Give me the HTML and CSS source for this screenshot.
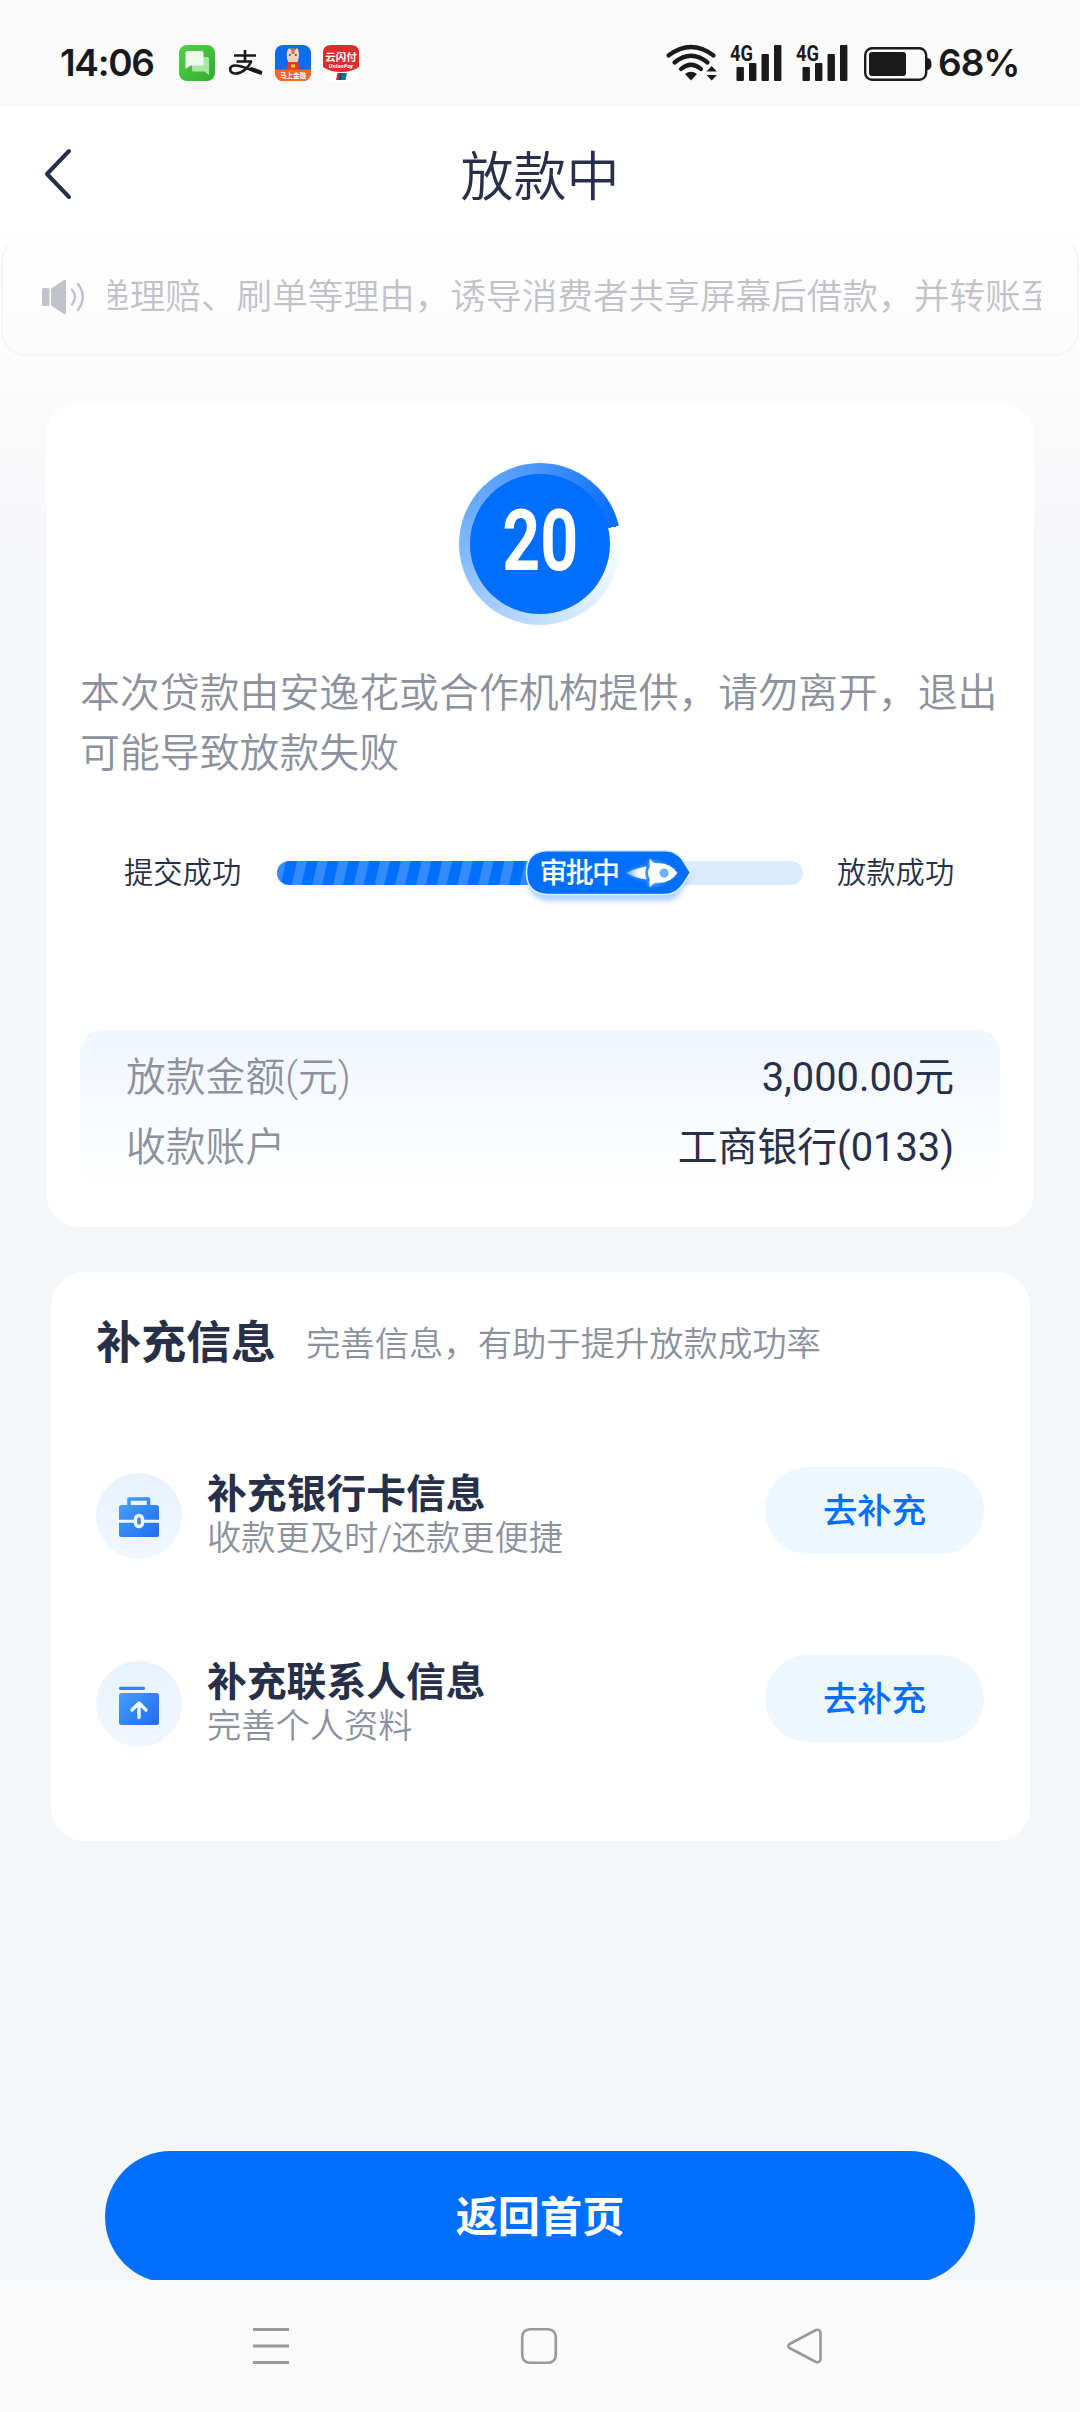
FILE: index.html
```html
<!DOCTYPE html>
<html lang="zh-CN">
<head>
<meta charset="utf-8">
<title>放款中</title>
<link rel="stylesheet" href="styles.css">
</head>
<body>
<div class="screen">
  <header class="status">
    <div class="status-left">
      <span class="clock">14:06</span>
      <svg class="app" viewBox="0 0 36 36">
        <defs><linearGradient id="msg" x1="0" y1="0" x2="1" y2="1"><stop offset="0" stop-color="#55cf4c"/><stop offset="1" stop-color="#2fae2a"/></linearGradient></defs>
        <rect width="36" height="36" rx="8" fill="url(#msg)"/>
        <path d="M13 12h15.500q1.500 0 1.500 1.500V30l-4.500-3.500H14.500q-1.500 0-1.500-1.500z" fill="#a9e6a4"/>
        <path d="M8 6h15q1.500 0 1.500 1.500v11.500q0 1.500-1.500 1.500H11.500L6.500 24V7.500Q6.500 6 8 6z" fill="#eefbec"/>
      </svg>
      <svg class="app" viewBox="0 0 36 36">
        <g fill="none" stroke="#1a1a1a" stroke-width="2.600">
          <path d="M7 10.500H29M18 5v11M9.500 16.500H25"/>
          <path d="M24.500 16C22 22 15 29 8 28.500C2 28 1.500 21.500 7 20.500C15 19.500 24 26 35 28.500"/>
          <path d="M23 23.500L34.500 27.800" stroke-width="4"/>
        </g>
      </svg>
      <svg class="app" viewBox="0 0 36 36">
        <defs><clipPath id="sq"><rect width="36" height="36" rx="8"/></clipPath></defs>
        <g clip-path="url(#sq)">
          <rect width="36" height="36" fill="#0b6cf3"/>
          <path d="M12 14Q11 5 14.500 3l2 2.500h3L22 3q3 3 1.500 11l-1 3h-9z" fill="#f4d3bd"/>
          <path d="M16.500 3h3v6h-3z" fill="#c97448"/>
          <circle cx="14.800" cy="10" r="1" fill="#6b3325"/><circle cx="20.800" cy="10" r="1" fill="#6b3325"/>
          <path d="M11 25l2-8h10l2 8z" fill="#e93a20"/><path d="M16 19.500h4v3h-4z" fill="#ffd633"/>
          <rect y="24.500" width="36" height="12" fill="#fa6424"/>
          <text x="18" y="33" text-anchor="middle" class="tiny" font-size="6.500">马上金融</text>
        </g>
      </svg>
      <svg class="app" viewBox="0 0 36 36">
        <rect width="36" height="36" rx="8" fill="#fff"/>
        <path d="M8 0h20q8 0 8 8v14q-7 5-18 5T0 22V8q0-8 8-8z" fill="#e22a2c"/>
        <text x="18" y="15.500" text-anchor="middle" class="tiny" font-size="10.500">云闪付</text>
        <text x="18" y="22.500" text-anchor="middle" class="tiny union" font-size="5.400">UnionPay</text>
        <path d="M14.500 28h4l-1.500 7h-4z" fill="#d0263e"/><path d="M17 28h3.500L19 35h-3.500z" fill="#174a83"/><path d="M19.500 28H24l-1.500 7H18z" fill="#0c7d83"/>
      </svg>
    </div>
    <div class="status-right">
      <svg class="wifi" viewBox="0 0 52 36">
        <g fill="none" stroke="#1a1a1a" stroke-width="4.200" stroke-linecap="round">
          <path d="M2.500 10.500Q25 -6.500 47.500 10.500M8.500 17.500Q25 4 41.500 17.500M15 24Q25 15.500 35 24"/>
        </g>
        <path d="M19 29q6-4.500 12 0l-6 6.500z" fill="#1a1a1a"/>
        <path d="M40.500 26.500l5.200-5.500 5.200 5.500zM40.500 30h10.400l-5.200 5.500z" fill="#1a1a1a"/>
      </svg>
      <svg class="signal" viewBox="0 0 52 38">
        <text x="0" y="17" class="net" textLength="23" lengthAdjust="spacingAndGlyphs">4G</text>
        <g fill="#1a1a1a"><rect x="6.500" y="23" width="7.400" height="14" rx="1"/><rect x="19" y="19" width="7.400" height="18" rx="1"/><rect x="31.500" y="10" width="7.400" height="27" rx="1"/><rect x="44" y="1" width="7.400" height="36" rx="1"/></g>
      </svg>
      <svg class="signal" viewBox="0 0 52 38">
        <text x="0" y="17" class="net" textLength="23" lengthAdjust="spacingAndGlyphs">4G</text>
        <g fill="#1a1a1a"><rect x="6.500" y="23" width="7.400" height="14" rx="1"/><rect x="19" y="19" width="7.400" height="18" rx="1"/><rect x="31.500" y="10" width="7.400" height="27" rx="1"/><rect x="44" y="1" width="7.400" height="36" rx="1"/></g>
      </svg>
      <svg class="battery" viewBox="0 0 68 36">
        <rect x="1.200" y="2.200" width="61" height="31.600" rx="7" fill="none" stroke="#1a1a1a" stroke-width="2.400"/>
        <rect x="5" y="6" width="37" height="24" rx="3" fill="#1a1a1a"/>
        <path d="M63 12q4.500 0 4.500 6t-4.500 6z" fill="#1a1a1a"/>
      </svg>
      <span class="percent">68%</span>
    </div>
  </header>

  <nav class="titlebar">
    <svg class="back" viewBox="0 0 32 54"><path d="M27 4L5 27l22 23" fill="none" stroke="#273048" stroke-width="4" stroke-linecap="round" stroke-linejoin="round"/></svg>
    <h1>放款中</h1>
  </nav>

  <section class="notice">
    <svg class="speaker" viewBox="0 0 43 36">
      <g fill="#c2c3ca"><rect x="0" y="9" width="7.500" height="18" rx="1.500"/><path d="M9 9.500L22 1.200q2-1 2 1V34q0 2-2 1L9 26.500z"/></g>
      <path d="M30 10.500q6 7.500 0 15M36 5q9.500 13 0 26" fill="none" stroke="#c2c3ca" stroke-width="2.400" stroke-linecap="round"/>
    </svg>
    <div class="marquee"><span>递理赔、刷单等理由，诱导消费者共享屏幕后借款，并转账至</span></div>
  </section>

  <main>
    <section class="card progress-card">
      <div class="countdown"><div class="count-inner"><span>20</span></div></div>
      <p class="tip">本次贷款由安逸花或合作机构提供，请勿离开，退出可能导致放款失败</p>
      <div class="steps">
        <span class="step-label">提交成功</span>
        <div class="track">
          <div class="fill"></div>
          <div class="badge">
            <svg class="badge-shape" viewBox="0 0 168 64">
              <defs>
                <filter id="glow" x="-50%" y="-50%" width="200%" height="200%"><feGaussianBlur stdDeviation="2.500"/></filter>
                <linearGradient id="flame"><stop offset="0" stop-color="#fff" stop-opacity=".3"/><stop offset=".7" stop-color="#fff"/></linearGradient>
              </defs>
              <path d="M23 8H143q12 2 20 21q-8 21-20 22H23Q2 48 2 29Q2 8 23 8z" fill="#006eff" opacity=".3" filter="url(#glow)"/>
              <path d="M23 .8H141Q152 1 159 12L165.500 22.500L159 33Q152 44 141 44.500H23Q1.500 44 1.500 22.500Q1.500 1 23 .8z" fill="#006eff" stroke="#d8ebff" stroke-width="1.600"/>
              <g fill="#8cc4ff" opacity=".8" filter="url(#glow)"><path d="M102 23l19-7v14zM124 10l14 4 12 9-12 9-14 5z"/></g>
              <path d="M101 23Q111 18 121.500 16.500Q119 23 121.500 29.500Q111 28 101 23z" fill="url(#flame)"/>
              <path fill-rule="evenodd" d="M125 8.500Q127 12.500 131 13.300Q145 12 152.500 23Q145 34 131 32.700Q127 33.500 125 37.500Q123.500 34 125 29.500Q121 23 125 16.500Q123.500 12 125 8.500zM139 18.500a4.500 4.500 0 1 0 .01 0z" fill="#fff"/>
            </svg>
            <span class="badge-text">审批中</span>
          </div>
        </div>
        <span class="step-label">放款成功</span>
      </div>
      <dl class="details">
        <div><dt>放款金额(元)</dt><dd>3,000.00元</dd></div>
        <div><dt>收款账户</dt><dd>工商银行(0133)</dd></div>
      </dl>
    </section>

    <section class="card info-card">
      <div class="info-head"><h2>补充信息</h2><span>完善信息，有助于提升放款成功率</span></div>
      <div class="item">
        <svg class="item-icon" viewBox="0 0 86 86">
          <defs>
            <linearGradient id="disc" x2="0" y2="1"><stop offset="0" stop-color="#e8f2fe"/><stop offset="1" stop-color="#f2f7ff"/></linearGradient>
            <linearGradient id="ico" gradientUnits="userSpaceOnUse" x1="23" y1="25" x2="63" y2="64"><stop offset="0" stop-color="#4ba0fb"/><stop offset="1" stop-color="#1c6fef"/></linearGradient>
          </defs>
          <circle cx="43" cy="43" r="43" fill="url(#disc)"/>
          <path d="M33 34v-8h19.500v8" fill="none" stroke="url(#ico)" stroke-width="3.600" stroke-linejoin="round"/>
          <rect x="23" y="32" width="40" height="32" rx="2.500" fill="url(#ico)"/>
          <path d="M23 48.200h40" stroke="#eef6ff" stroke-width="3"/>
          <rect x="39.500" y="42.500" width="7" height="11" rx="3.500" fill="#4a86d8" stroke="#eef6ff" stroke-width="3.400"/>
        </svg>
        <div class="item-text"><h3>补充银行卡信息</h3><p>收款更及时/还款更便捷</p></div>
        <button class="add">去补充</button>
      </div>
      <div class="item">
        <svg class="item-icon" viewBox="0 0 86 86">
          <circle cx="43" cy="43" r="43" fill="url(#disc)"/>
          <rect x="23" y="25.800" width="26" height="3.200" rx="1.400" fill="#2e85f5"/>
          <rect x="23" y="32" width="40" height="32" rx="2.500" fill="url(#ico)"/>
          <path d="M43 56.500V43M36 49l7-7 7 7" fill="none" stroke="#f4f9ff" stroke-width="3.400" stroke-linecap="round" stroke-linejoin="round"/>
        </svg>
        <div class="item-text"><h3>补充联系人信息</h3><p>完善个人资料</p></div>
        <button class="add">去补充</button>
      </div>
    </section>
  </main>

  <div class="action"><button class="home">返回首页</button></div>

  <footer class="sysnav">
    <svg viewBox="0 0 40 40"><path d="M2 3.500h36M2 20h36M2 36.500h36" stroke="#999" stroke-width="3"/></svg>
    <svg viewBox="0 0 40 40"><rect x="4.200" y="3.200" width="33.600" height="33.600" rx="7.500" fill="none" stroke="#999" stroke-width="2.600"/></svg>
    <svg viewBox="0 0 40 40"><path d="M4.500 18Q2 20 4.500 22L31 36Q35 37 35.500 33V7Q35 3 31 4z" fill="none" stroke="#999" stroke-width="2.600" stroke-linejoin="round"/></svg>
  </footer>
</div>
</body>
</html>
```
FILE: styles.css
```css
* { box-sizing: border-box; margin: 0; padding: 0; }
body {
  width: 1080px;
  height: 2412px;
  overflow: hidden;
  font-family: Roboto, "Noto Sans CJK SC", sans-serif;
  color: #273048;
}
svg { display: block; flex: none; overflow: visible; }
button { border: 0; font-family: inherit; }

.screen {
  height: 2412px;
  display: flex;
  flex-direction: column;
  background: linear-gradient(#fff 220px, #fbfbfc 400px, #f5f6f8 560px);
}

/* Status bar */
.status {
  flex: none;
  height: 107px;
  padding: 18px 63px 0 60px;
  background: #fafafa;
  color: #1a1a1a;
  display: flex;
  justify-content: space-between;
  align-items: center;
}
.status-left, .status-right { display: flex; align-items: center; }
.clock {
  width: 119px;
  font: 600 37px/40px Inter, sans-serif;
  letter-spacing: -1.300px;
}
.app { width: 36px; height: 36px; margin-right: 12px; }
.tiny { fill: #fff; font-family: "Noto Sans CJK SC", sans-serif; font-weight: 700; }
.union { font-family: "Open Sans", sans-serif; font-style: italic; }
.wifi { width: 52px; height: 36px; margin-right: 12px; }
.signal { width: 52px; height: 38px; margin-right: 14px; }
.net { font: 700 22px Roboto, sans-serif; fill: #1a1a1a; }
.battery { width: 68px; height: 36px; margin: 2px 6px 0 2px; }
.percent { width: 79px; font: 600 37px/40px Inter, sans-serif; white-space: nowrap; letter-spacing: -1px; }

/* Title bar */
.titlebar {
  flex: none;
  height: 131px;
  padding: 2px 42px 0;
  display: grid;
  grid-template-columns: 32px 1fr 32px;
  align-items: center;
}
.back { width: 32px; height: 54px; }
h1 { text-align: center; font-weight: 350; font-size: 53px; line-height: 70px; padding-top: 8px; }

/* Scrolling notice */
.notice {
  flex: none;
  height: 118px;
  margin: 0 1px;
  padding: 0 36px 0 39px;
  border: 2px solid #f6f6f7;
  border-top-color: #fdfdfd;
  border-radius: 24px;
  display: flex;
  align-items: center;
  gap: 23px;
}
.speaker { width: 43px; height: 36px; }
.marquee {
  flex: 1;
  min-width: 0;
  overflow: hidden;
  white-space: nowrap;
  color: #c2c3ca;
  font-weight: 350;
  font-size: 35.650px;
  line-height: 50px;
}
.marquee span { display: inline-block; margin-left: -14px; }

.card { background: #fff; border-radius: 34px; }

/* Progress card */
.progress-card {
  height: 825px;
  margin: 46px 46px 0;
  padding: 61px 34px 0;
}
.countdown {
  width: 162px;
  height: 162px;
  margin: 0 auto;
  padding: 11px;
  border-radius: 50%;
  background: conic-gradient(from 77deg, #fff 0deg, #f2f8ff 30deg, #cbe4ff 90deg, #86bcff 180deg, #4d98fb 275deg, #0d72fb 345deg, #0970fd 360deg);
}
.count-inner {
  width: 140px;
  height: 140px;
  border-radius: 50%;
  background: #006eff;
  color: #fff;
  font-weight: 700;
  font-size: 86px;
  line-height: 134px;
  text-align: center;
}
.count-inner span { display: inline-block; transform: scaleX(.77); }
.tip {
  margin-top: 39px;
  font-weight: 350;
  font-size: 39.900px;
  line-height: 60px;
  color: #8d919d;
}
.steps {
  margin-top: 59px;
  padding: 0 45px 0 44px;
  height: 60px;
  display: flex;
  justify-content: space-between;
  align-items: center;
}
.step-label { font-weight: 350; font-size: 29.300px; line-height: 44px; width: 118px; white-space: nowrap; }
.track {
  position: relative;
  width: 526px;
  height: 24px;
  border-radius: 12px;
  background: #dbeafd;
}
.fill {
  width: 270px;
  height: 24px;
  border-radius: 12px 0 0 12px;
  background: repeating-linear-gradient(103deg, #338bfd 0 8px, #006eff 10px 19px, #338bfd 20.200px);
}
.badge { position: absolute; left: 248px; top: -11px; width: 168px; height: 64px; }
.badge-shape { position: absolute; width: 168px; height: 64px; }
.badge-text {
  position: absolute;
  left: 15px;
  top: 3px;
  color: #fff;
  font-weight: 500;
  font-size: 28px;
  line-height: 42px;
  letter-spacing: -1.700px;
}
.details {
  margin-top: 127px;
  height: 164px;
  padding: 13px 46px 0;
  border-radius: 22px;
  background: linear-gradient(#f0f6fe, #fff 95%);
  font-size: 39.800px;
  font-weight: 350;
  line-height: 70px;
}
.details div { display: flex; justify-content: space-between; }
.details dt { color: #8d919d; }
.details dd { font-weight: 400; }

/* Supplementary info card */
.info-card {
  height: 569px;
  margin: 45px 50px 0 51px;
  padding: 37px 45px 0;
}
.info-head { display: flex; align-items: center; height: 70px; }
h2 { width: 210px; font-weight: 700; font-size: 45px; line-height: 66px; }
.info-head span { font-weight: 350; font-size: 34.350px; line-height: 50px; color: #8d919d; }
.item { height: 101px; margin-top: 86px; display: flex; align-items: center; }
.item + .item { margin-top: 87px; }
.item-icon { width: 86px; height: 86px; }
.item-text { flex: 1; padding-left: 25px; }
h3 { font-weight: 700; font-size: 39.800px; line-height: 44px; }
.item-text p { font-weight: 350; font-size: 34.250px; line-height: 42px; color: #8d919d; }
.add {
  width: 219px;
  height: 87px;
  margin: 0 1px 10px 0;
  padding-bottom: 6px;
  border-radius: 44px;
  background: #eef6fe;
  color: #006eff;
  font-weight: 500;
  font-size: 34.400px;
}

/* Bottom action, cropped by the navigation bar */
.action { height: 129px; margin: 310px 105px 0; overflow: hidden; }
.home {
  display: block;
  width: 870px;
  height: 132px;
  padding-bottom: 8px;
  border-radius: 66px;
  background: #006eff;
  color: #fff;
  font-weight: 700;
  font-size: 42.200px;
}

.sysnav {
  flex: none;
  height: 132px;
  padding: 0 255px 0 251px;
  background: #fafafa;
  display: flex;
  justify-content: space-between;
  align-items: center;
}
.sysnav svg { width: 40px; height: 40px; }
```
